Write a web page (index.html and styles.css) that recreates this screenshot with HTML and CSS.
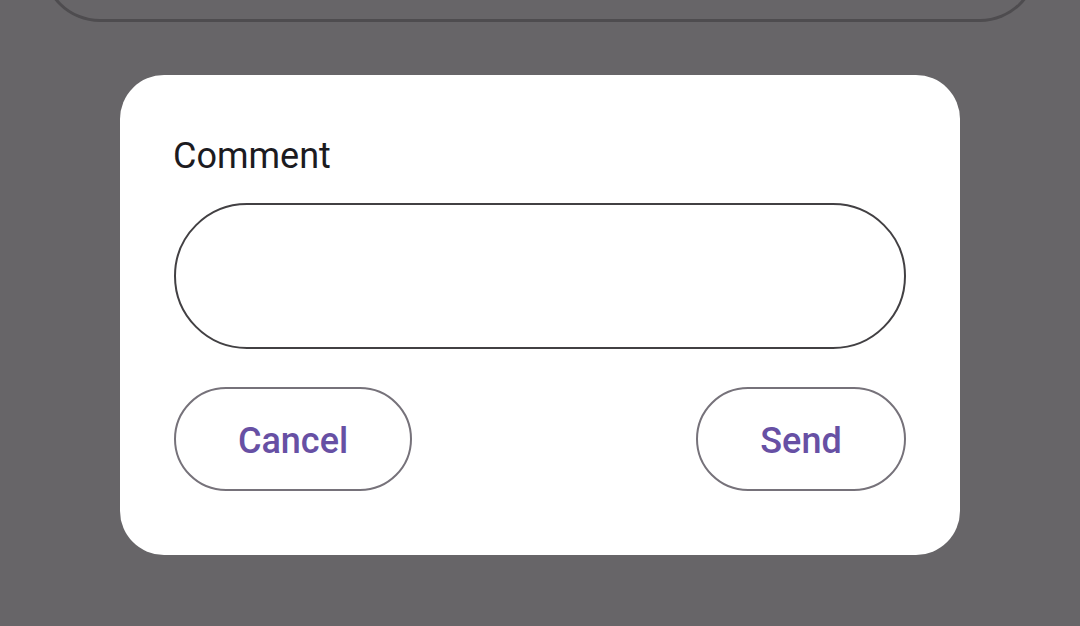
FILE: index.html
```html
<!DOCTYPE html>
<html>
<head>
<meta charset="utf-8">
<link rel="stylesheet" href="styles.css">
</head>
<body>
<div class="page">
  <div class="card-peek"></div>
  <div class="dialog">
    <div class="label">Comment</div>
    <div class="field"></div>
    <div class="actions">
      <button class="btn btn-cancel">Cancel</button>
      <button class="btn btn-send">Send</button>
    </div>
  </div>
</div>
</body>
</html>
```
FILE: styles.css
```css
html, body {
  margin: 0;
  padding: 0;
  background: #676568;
  width: 1080px;
  height: 626px;
  overflow: hidden;
  font-family: Roboto, "Noto Sans", sans-serif;
}
.page {
  display: flex;
  flex-direction: column;
  align-items: center;
}
.card-peek {
  box-sizing: border-box;
  width: 996px;
  height: 82px;
  margin-top: -60px;
  border: 3px solid #4e4c4f;
  border-top: none;
  border-radius: 0 0 58px 58px;
}
.dialog {
  box-sizing: border-box;
  width: 840px;
  height: 480px;
  margin-top: 53px;
  background: #ffffff;
  border-radius: 44px;
  padding: 60px 54px 64px 54px;
  display: flex;
  flex-direction: column;
}
.label {
  font-size: 36px;
  line-height: 42px;
  color: #1c1b1f;
  margin-left: -1px;
}
.field {
  box-sizing: border-box;
  margin-top: 26px;
  height: 146px;
  border: 2px solid #424043;
  border-radius: 73px;
}
.actions {
  margin-top: 38px;
  display: flex;
  justify-content: space-between;
}
.btn {
  box-sizing: border-box;
  height: 104px;
  padding: 4px 0 0 0;
  background: #ffffff;
  border: 2px solid #76727a;
  border-radius: 52px;
  font-family: Roboto, "Noto Sans", sans-serif;
  font-weight: 500;
  font-size: 36px;
  color: #6750a4;
  text-align: center;
  cursor: pointer;
}
.btn-cancel {
  width: 238px;
}
.btn-send {
  width: 210px;
}
```
